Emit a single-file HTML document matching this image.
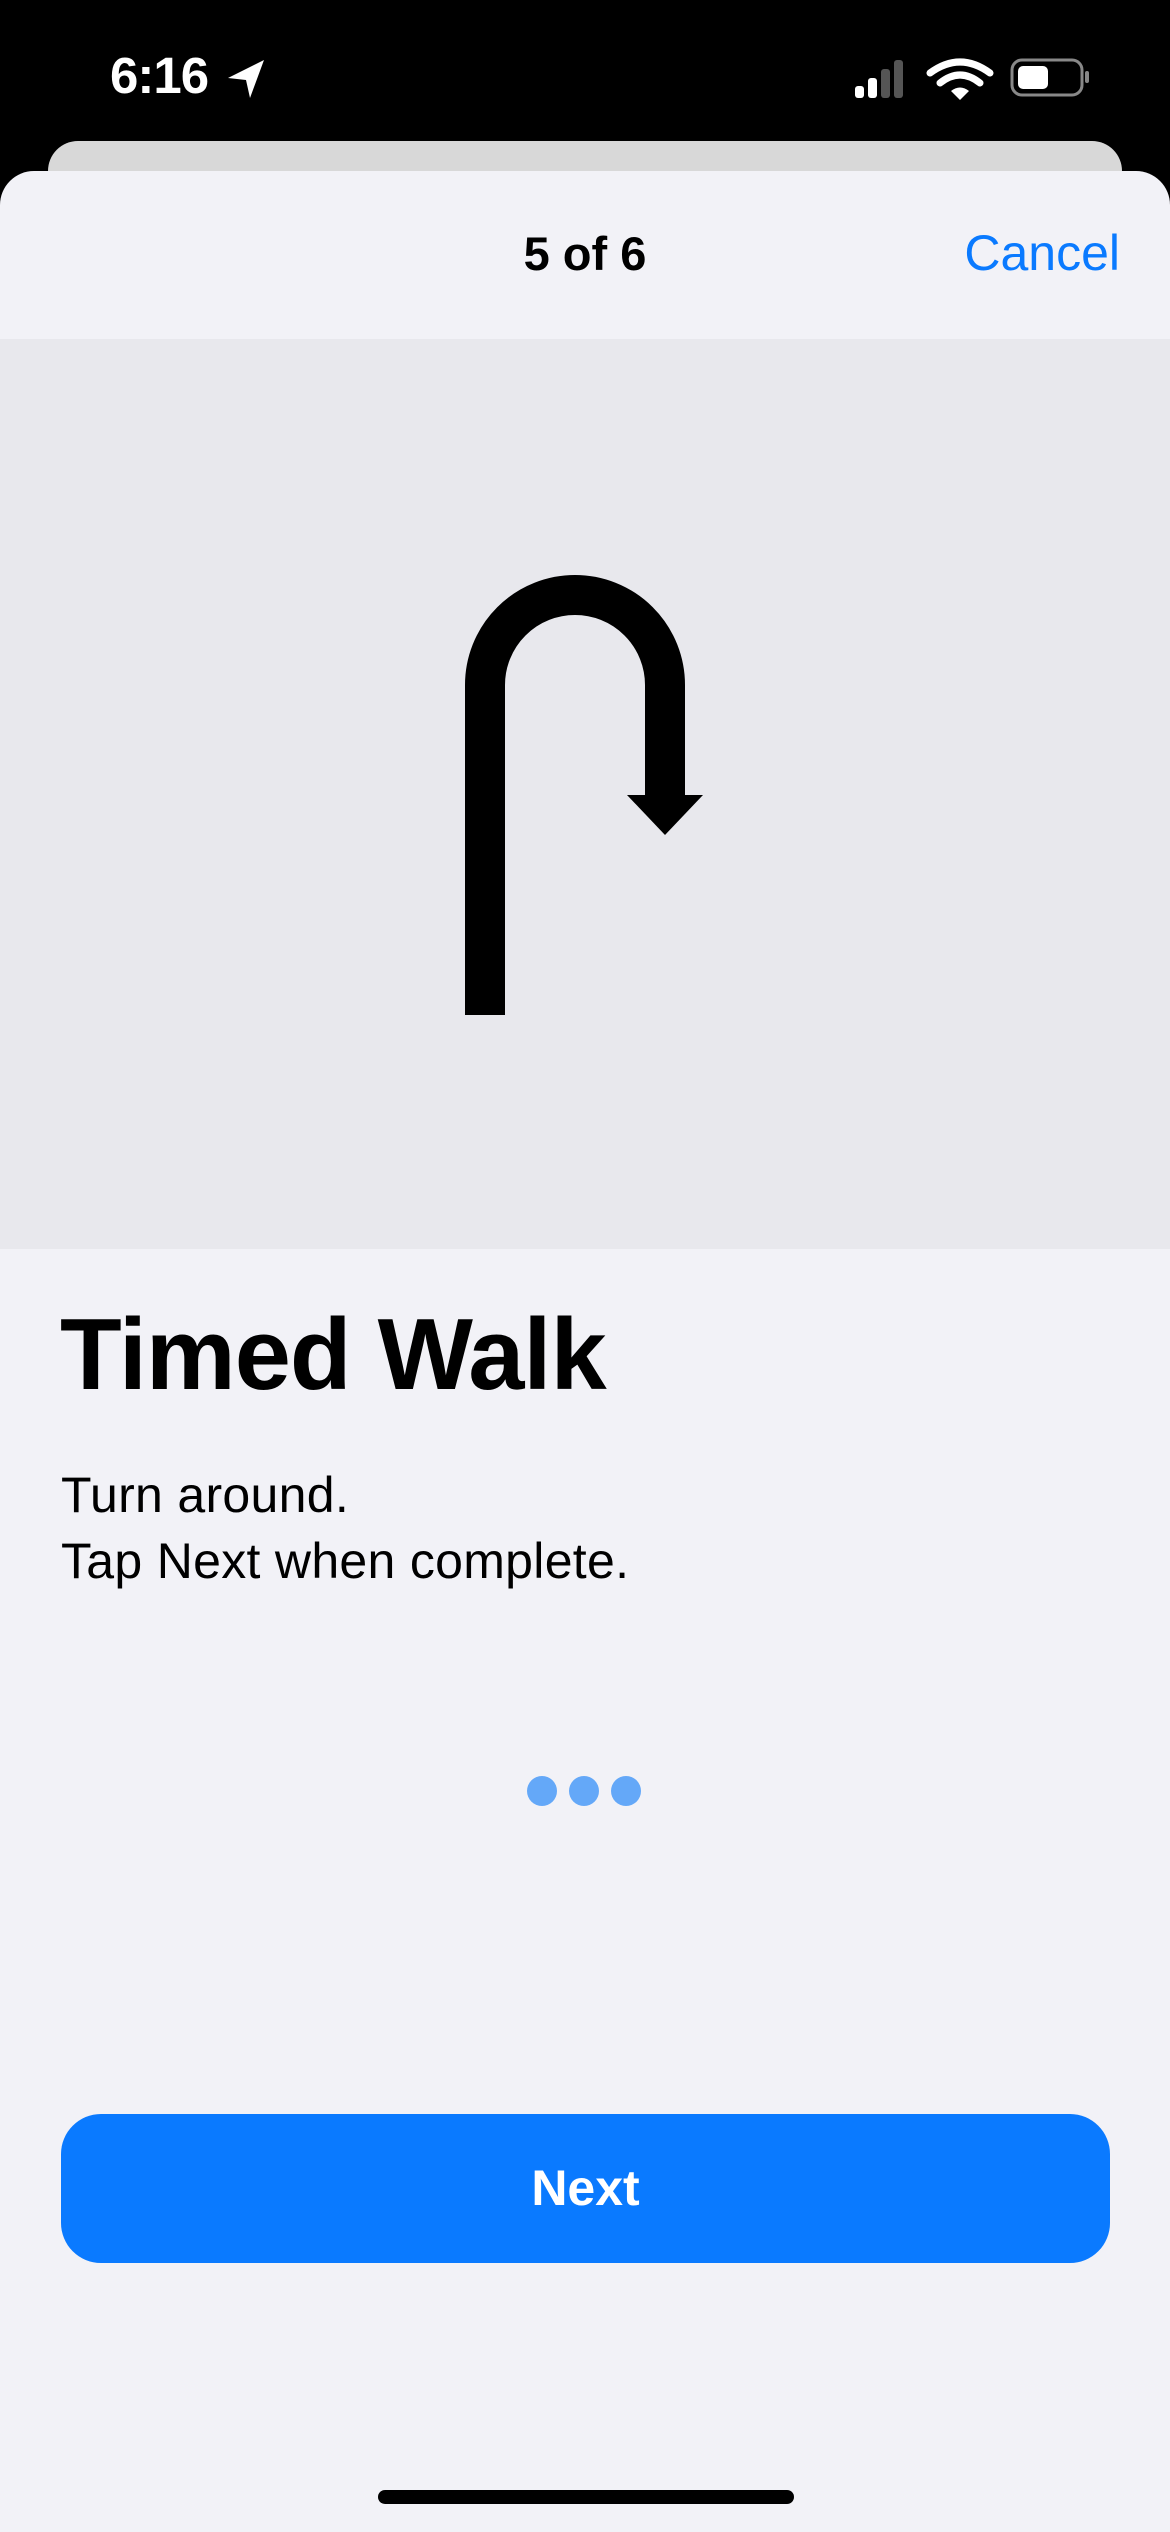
<!DOCTYPE html>
<html><head><meta charset="utf-8"><style>
*{margin:0;padding:0;box-sizing:border-box}
body{width:1170px;height:2532px;background:#000;position:relative;overflow:hidden;font-family:"Liberation Sans",sans-serif}
.t{position:absolute;white-space:nowrap}
</style></head><body>
<div class="t" style="left:110px;top:46px;color:#fff;font-size:51px;font-weight:bold;letter-spacing:-1px">6:16</div>
<svg style="position:absolute;left:226px;top:58px" width="42" height="42" viewBox="0 0 42 42"><path d="M38 2 L2 20 L20 22 L24 40 Z" fill="#fff"/></svg>
<svg style="position:absolute;left:850px;top:56px" width="240" height="44" viewBox="0 0 240 44">
<rect x="5" y="30" width="9" height="12" rx="3" fill="#fff"/>
<rect x="18" y="22" width="9" height="20" rx="3" fill="#fff"/>
<rect x="31" y="13" width="9" height="29" rx="3" fill="#555"/>
<rect x="44" y="4" width="9" height="38" rx="3" fill="#555"/>
<path d="M80 17 Q110 -5 140 17" stroke="#fff" stroke-width="7" fill="none" stroke-linecap="round"/>
<path d="M90 27 Q110 11 130 27" stroke="#fff" stroke-width="7" fill="none" stroke-linecap="round"/>
<path d="M101 35 L110 44 L119 35 Q110 28 101 35Z" fill="#fff"/>
<rect x="162" y="4" width="70" height="35" rx="10" fill="none" stroke="#888" stroke-width="3"/>
<rect x="168" y="10" width="30" height="23" rx="5" fill="#fff"/>
<rect x="235" y="15" width="4" height="12" rx="2" fill="#888"/>
</svg>
<div style="position:absolute;left:48px;top:141px;width:1074px;height:60px;background:#d8d8d8;border-radius:30px 30px 0 0"></div>
<div style="position:absolute;left:0;top:171px;width:1170px;height:2361px;background:#f2f2f7;border-radius:34px 34px 0 0"></div>
<div class="t" style="left:0;width:1170px;text-align:center;top:226px;font-size:47px;font-weight:bold;color:#000">5 of 6</div>
<div class="t" style="right:50px;top:224px;font-size:50px;color:#0a7aff">Cancel</div>
<div style="position:absolute;left:0;top:339px;width:1170px;height:910px;background:#e8e8ed"></div>
<svg style="position:absolute;left:0;top:0" width="1170" height="1250">
<path d="M485 1015 L485 685 A90 90 0 0 1 665 685 L665 800" stroke="#000" stroke-width="40" fill="none"/>
<path d="M627 795 L703 795 L665 835 Z" fill="#000"/>
</svg>
<div class="t" style="left:60px;top:1298px;font-size:101px;font-weight:bold;color:#000;letter-spacing:-1px">Timed Walk</div>
<div class="t" style="left:61px;top:1462px;font-size:50px;line-height:66px;color:#000;letter-spacing:0.3px">Turn around.<br>Tap Next when complete.</div>
<div style="position:absolute;left:527px;top:1776px;width:30px;height:30px;border-radius:50%;background:#64a8f8"></div>
<div style="position:absolute;left:569px;top:1776px;width:30px;height:30px;border-radius:50%;background:#64a8f8"></div>
<div style="position:absolute;left:611px;top:1776px;width:30px;height:30px;border-radius:50%;background:#64a8f8"></div>
<div style="position:absolute;left:61px;top:2114px;width:1049px;height:149px;background:#0a7aff;border-radius:40px;color:#fff;font-size:50px;font-weight:bold;text-align:center;line-height:149px">Next</div>
<div style="position:absolute;left:378px;top:2490px;width:416px;height:14px;border-radius:7px;background:#000"></div>
</body></html>
